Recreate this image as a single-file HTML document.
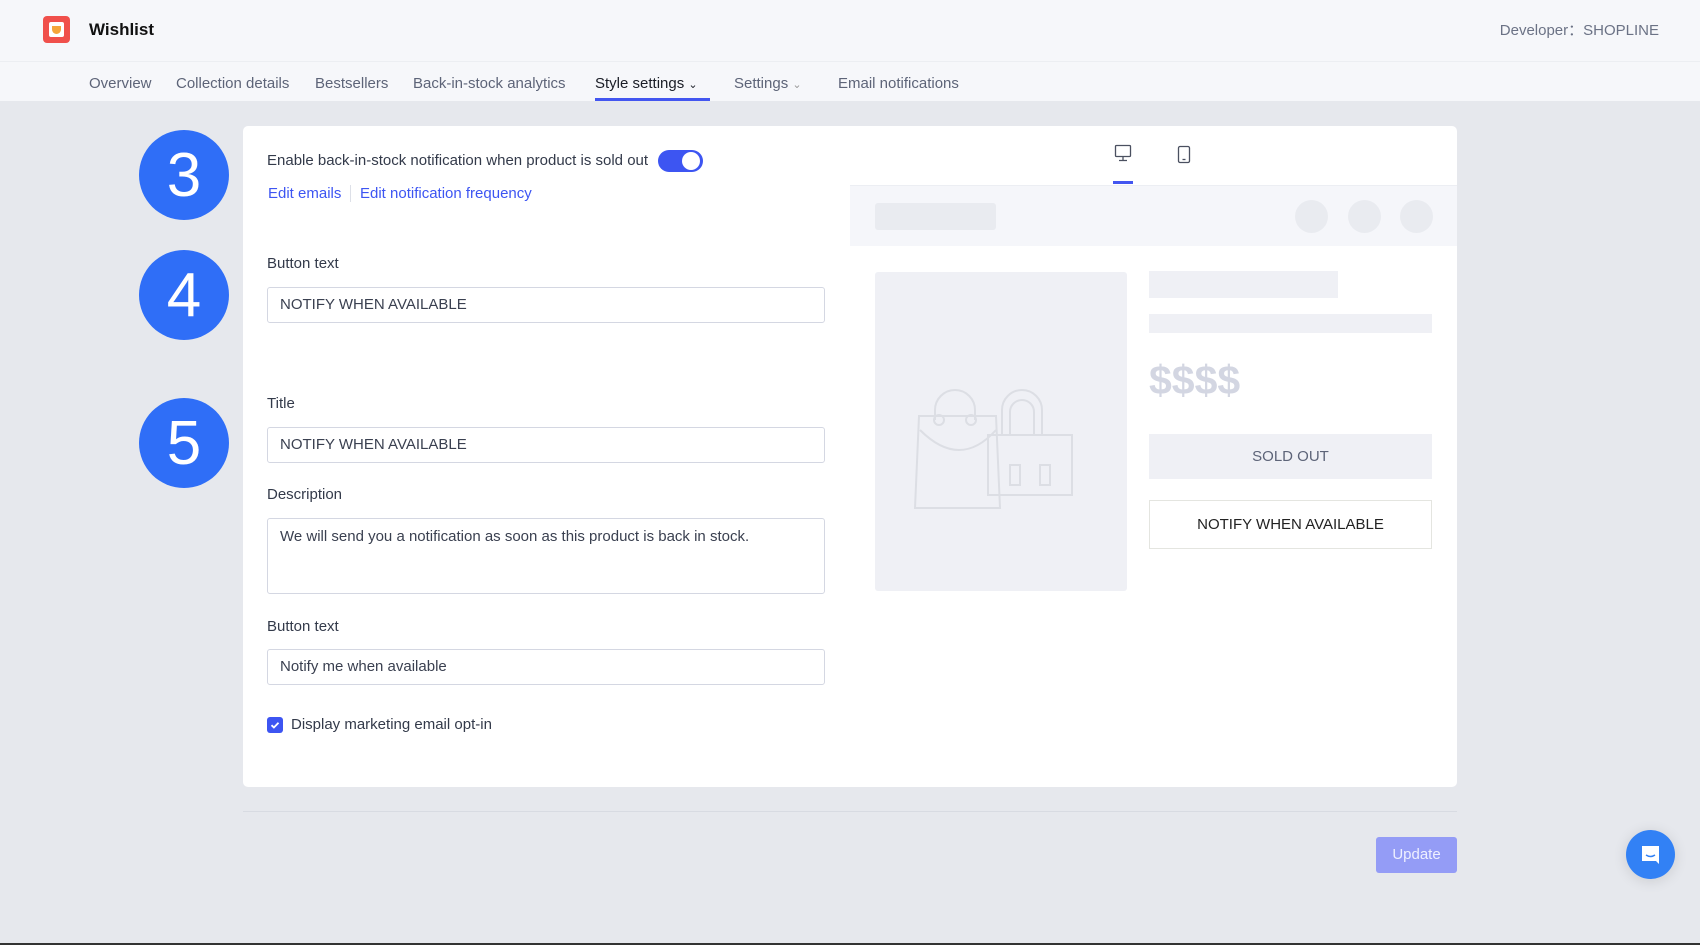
<!DOCTYPE html>
<html><head><meta charset="utf-8"><style>
*{box-sizing:border-box;margin:0;padding:0}
body{width:1700px;height:945px;overflow:hidden;background:#e6e8ed;font-family:"Liberation Sans",sans-serif;color:#333a4a;position:relative}
.a{position:absolute}
.t{position:absolute;white-space:nowrap;font-size:15px;line-height:18px}
.inp{position:absolute;left:267px;width:558px;border:1px solid #d4d7e2;border-radius:3px;background:#fff;font-size:15px;color:#3a4050;padding-left:12px}
.circ{position:absolute;left:139px;width:90px;height:90px;border-radius:50%;background:#2f6ef7;color:#fff;font-size:62px;text-align:center;line-height:92px}
.nav{position:absolute;top:75px;font-size:15px;color:#5d6478;white-space:nowrap}
.g{position:absolute;background:#eff0f5}
</style></head><body>
<div class="a" style="left:0;top:0;width:1700px;height:62px;background:#f6f7fa;border-bottom:1px solid #eceef2"></div>
<div class="a" style="left:0;top:62px;width:1700px;height:39px;background:#f6f7fa"></div>
<div class="a" style="left:43px;top:16px;width:27px;height:27px;background:#f0504b;border-radius:4px"></div>
<div class="a" style="left:49px;top:22px;width:15px;height:15px;background:#fff;border-radius:2px"></div>
<div class="a" style="left:52px;top:26px;width:9px;height:8px;background:#f5a53a;border-radius:0 0 5px 5px"></div>
<div class="t" style="left:89px;top:21px;font-size:17px;font-weight:bold;color:#111">Wishlist</div>
<div class="t" style="right:41px;top:22px;color:#6b7285">Developer：SHOPLINE</div>
<div class="nav" style="left:89px">Overview</div>
<div class="nav" style="left:176px">Collection details</div>
<div class="nav" style="left:315px">Bestsellers</div>
<div class="nav" style="left:413px">Back-in-stock analytics</div>
<div class="nav" style="left:595px;color:#1a1d26">Style settings <span style="font-size:11px">&#8964;</span></div>
<div class="a" style="left:595px;top:98px;width:115px;height:3px;background:#4356f0"></div>
<div class="nav" style="left:734px">Settings <span style="font-size:11px;color:#999">&#8964;</span></div>
<div class="nav" style="left:838px">Email notifications</div>

<div class="circ" style="top:130px">3</div>
<div class="circ" style="top:250px">4</div>
<div class="circ" style="top:398px">5</div>

<div class="a" style="left:243px;top:126px;width:1214px;height:661px;background:#fff;border-radius:5px"></div>
<div class="t" style="left:267px;top:152px;color:#333a4a">Enable back-in-stock notification when product is sold out</div>
<div class="a" style="left:658px;top:150px;width:45px;height:22px;background:#3d55f2;border-radius:11px"></div>
<div class="a" style="left:682px;top:152px;width:18px;height:18px;background:#fff;border-radius:50%"></div>
<div class="t" style="left:268px;top:185px;color:#3d55f2">Edit emails</div>
<div class="a" style="left:350px;top:185px;width:1px;height:17px;background:#dde0e8"></div>
<div class="t" style="left:360px;top:185px;color:#3d55f2">Edit notification frequency</div>
<div class="t" style="left:267px;top:255px">Button text</div>
<div class="inp" style="top:287px;height:36px;line-height:34px">NOTIFY WHEN AVAILABLE</div>
<div class="t" style="left:267px;top:395px">Title</div>
<div class="inp" style="top:427px;height:36px;line-height:34px">NOTIFY WHEN AVAILABLE</div>
<div class="t" style="left:267px;top:486px">Description</div>
<div class="inp" style="top:518px;height:76px;padding-top:9px;line-height:18px">We will send you a notification as soon as this product is back in stock.</div>
<div class="t" style="left:267px;top:618px">Button text</div>
<div class="inp" style="top:649px;height:36px;line-height:34px">Notify me when available</div>
<div class="a" style="left:267px;top:717px;width:16px;height:16px;background:#3d55f2;border-radius:3px"></div>
<svg class="a" style="left:267px;top:717px" width="16" height="16"><path d="M4.5 8.2l2.4 2.3 4.6-4.8" stroke="#fff" stroke-width="1.8" fill="none"/></svg>
<div class="t" style="left:291px;top:716px">Display marketing email opt-in</div>

<svg class="a" style="left:1113px;top:144px" width="20" height="20" fill="none" stroke="#4a5060" stroke-width="1.3"><rect x="2.5" y="1.5" width="15" height="11" rx="1"/><path d="M10 12.5v4M6 16.5h8"/></svg>
<div class="a" style="left:1113px;top:181px;width:20px;height:3px;background:#4356f0"></div>
<svg class="a" style="left:1175px;top:145px" width="18" height="20" fill="none" stroke="#4a5060" stroke-width="1.3"><rect x="3.5" y="1.5" width="11" height="16" rx="1.5"/><path d="M7.5 14.5h3"/></svg>
<div class="a" style="left:850px;top:185px;width:607px;height:61px;background:#f5f6fa;border-top:1px solid #eceef3"></div>
<div class="g" style="left:875px;top:203px;width:121px;height:27px;background:#e9ebf0;border-radius:3px"></div>
<div class="g" style="left:1295px;top:200px;width:33px;height:33px;border-radius:50%;background:#e9ebf0"></div>
<div class="g" style="left:1348px;top:200px;width:33px;height:33px;border-radius:50%;background:#e9ebf0"></div>
<div class="g" style="left:1400px;top:200px;width:33px;height:33px;border-radius:50%;background:#e9ebf0"></div>
<div class="g" style="left:875px;top:272px;width:252px;height:319px;border-radius:3px"></div>
<svg class="a" style="left:910px;top:370px" width="170" height="140" fill="none" stroke="#dcdee4" stroke-width="2"><path d="M78 65h84v60H78z"/><path d="M92 65V40a20 20 0 0 1 40 0v25"/><path d="M100 65V42a12 12 0 0 1 24 0v23"/><path d="M5 138l4-92h77l4 92z"/><path d="M10 60q40 40 76 0"/><path d="M25 50V40a20 20 0 0 1 40 0v10"/><circle cx="29" cy="50" r="5"/><circle cx="61" cy="50" r="5"/><path d="M100 95h10v20h-10zM130 95h10v20h-10z"/></svg>
<div class="g" style="left:1149px;top:271px;width:189px;height:27px"></div>
<div class="g" style="left:1149px;top:314px;width:283px;height:19px"></div>
<div class="t" style="left:1149px;top:357px;font-size:41px;line-height:46px;font-weight:bold;color:#d3d6e2">$$$$</div>
<div class="g" style="left:1149px;top:434px;width:283px;height:45px;text-align:center;line-height:45px;font-size:15px;color:#5d6478">SOLD OUT</div>
<div class="a" style="left:1149px;top:500px;width:283px;height:49px;border:1px solid #e4e5e0;text-align:center;line-height:47px;font-size:15px;color:#222">NOTIFY WHEN AVAILABLE</div>

<div class="a" style="left:243px;top:811px;width:1214px;height:1px;background:#d8dbe2"></div>
<div class="a" style="left:1376px;top:837px;width:81px;height:36px;background:#949cf6;border-radius:3px;color:#eef0ff;font-size:15px;text-align:center;line-height:36px">Update</div>
<div class="a" style="left:1626px;top:830px;width:49px;height:49px;border-radius:50%;background:#3281f5;box-shadow:0 2px 14px rgba(0,0,0,.12)"></div>
<svg class="a" style="left:1638px;top:842px" width="25" height="25"><path d="M4 4h17v18l-3-3H4z" fill="#fff"/><path d="M8 13q4.5 3 9 0" stroke="#3281f5" stroke-width="1.5" fill="none"/></svg>
<div class="a" style="left:0;top:943px;width:1700px;height:2px;background:#333"></div>
</body></html>
